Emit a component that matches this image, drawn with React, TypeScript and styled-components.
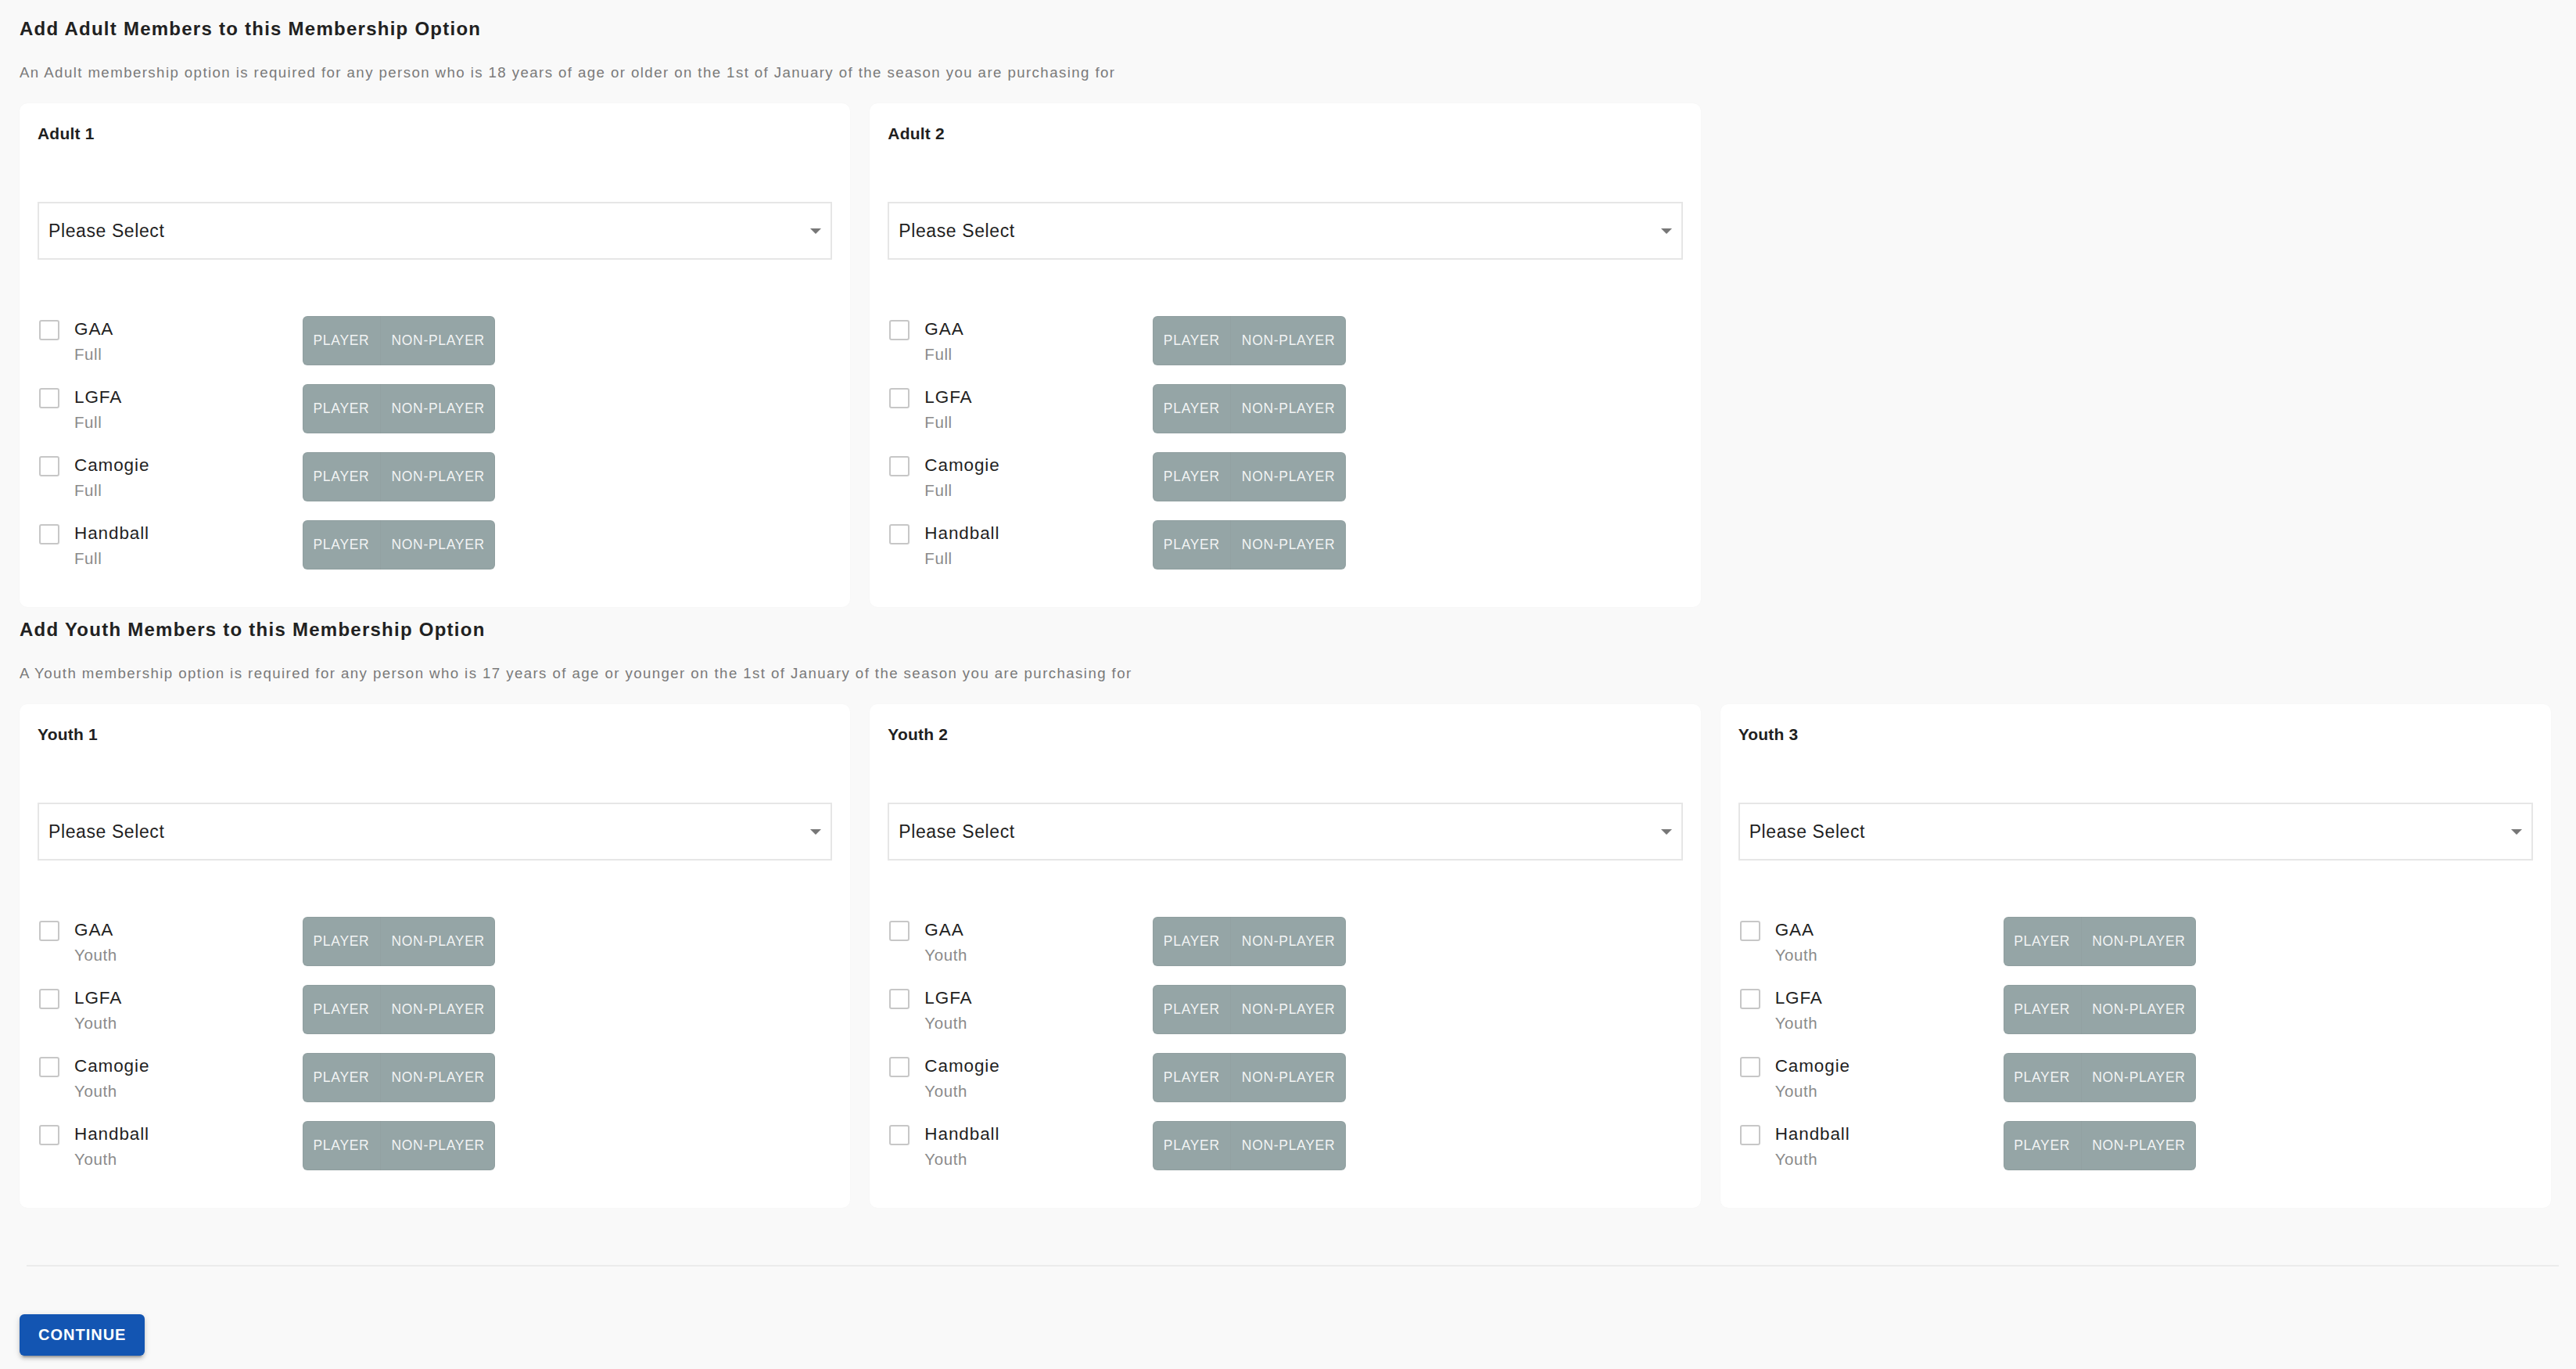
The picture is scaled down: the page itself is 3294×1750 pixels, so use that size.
import React from "react";
import styled, { createGlobalStyle } from "styled-components";

const GlobalStyle = createGlobalStyle`
  html, body { margin: 0; padding: 0; background: #f9f9f9; }
  body { font-family: "Liberation Sans", Arial, Helvetica, sans-serif; color: #212121; }
  * { box-sizing: border-box; }
`;

const Page = styled.div`
  padding: 21px 32px 17px 25px;
  background: #f9f9f9;
  min-height: 1750px;
`;

const Section = styled.section<{ $top?: number }>`
  margin-top: ${(p) => p.$top ?? 0}px;
`;

const Heading = styled.h2`
  margin: 0;
  font-size: 24px;
  line-height: 32px;
  font-weight: 700;
  letter-spacing: 1.25px;
  color: #212121;
`;

const Description = styled.p`
  margin: 27px 0 0;
  font-size: 18.7px;
  line-height: 26px;
  letter-spacing: 1.4px;
  color: #7a7a7a;
`;

const CardGrid = styled.div`
  margin-top: 26px;
  display: grid;
  grid-template-columns: repeat(3, 1fr);
  column-gap: 25px;
`;

const Card = styled.div`
  background: #ffffff;
  border-radius: 10px;
  padding: 25px 23px 48px 23px;
  box-shadow: 0 0 2px rgba(0, 0, 0, 0.03);
`;

const CardTitle = styled.div`
  font-size: 21px;
  line-height: 28px;
  font-weight: 700;
  letter-spacing: 0.2px;
  color: #1f1f1f;
`;

const SelectBox = styled.div`
  margin-top: 73px;
  height: 74px;
  border: 2px solid #e6e6e6;
  display: flex;
  align-items: center;
  justify-content: space-between;
  padding: 0 12px 0 12px;
  background: #fff;
`;

const SelectText = styled.span`
  font-size: 23px;
  letter-spacing: 0.6px;
  color: #1f1f1f;
`;

const Caret = styled.span`
  width: 0;
  height: 0;
  border-left: 7.5px solid transparent;
  border-right: 7.5px solid transparent;
  border-top: 7px solid #777;
`;

const Rows = styled.div`
  margin-top: 72px;
  display: flex;
  flex-direction: column;
  gap: 24px;
`;

const Row = styled.div`
  display: flex;
  align-items: flex-start;
  height: 63px;
`;

const OptionLabel = styled.label`
  width: 339px;
  flex: none;
  display: flex;
  align-items: flex-start;
`;

const CheckBox = styled.span`
  margin: 5px 0 0 2px;
  width: 26px;
  height: 26px;
  border: 2.5px solid #c7c7c7;
  border-radius: 3px;
  flex: none;
`;

const LabelText = styled.div`
  margin-left: 19px;
  display: flex;
  flex-direction: column;
  padding-top: 1.5px;
`;

const SportName = styled.span`
  font-size: 22.5px;
  line-height: 30px;
  letter-spacing: 0.9px;
  color: #1f1f1f;
`;

const SportType = styled.span`
  margin-top: 3px;
  font-size: 20.5px;
  line-height: 27px;
  letter-spacing: 0.6px;
  color: #8a8a8a;
`;

const ToggleGroup = styled.div`
  display: flex;
  height: 63px;
  border-radius: 6px;
  overflow: hidden;
  background: #95a5a6;
  box-shadow: inset 0 0 0 1px rgba(0, 0, 0, 0.04);
`;

const ToggleButton = styled.button<{ $first?: boolean }>`
  border: none;
  border-left: ${(p) => (p.$first ? "none" : "1px solid rgba(0,0,0,0.02)")};
  background: transparent;
  padding: 0 13.5px;
  font-family: "Liberation Sans", Arial, Helvetica, sans-serif;
  font-size: 17.5px;
  letter-spacing: 0.7px;
  color: rgba(255, 255, 255, 0.9);
  text-transform: uppercase;
  cursor: pointer;
`;

const Divider = styled.hr`
  margin: 73px -10px 0 9px;
  border: none;
  height: 2px;
  background: #ececec;
`;

const ContinueButton = styled.button`
  margin-top: 61px;
  height: 53px;
  padding: 0 24px;
  border: none;
  border-radius: 6px;
  background: #1355b2;
  color: #ffffff;
  font-family: "Liberation Sans", Arial, Helvetica, sans-serif;
  font-weight: 700;
  font-size: 20px;
  letter-spacing: 1px;
  text-transform: uppercase;
  box-shadow: 0 6px 2px -4px rgba(0, 0, 0, 0.2), 0 4px 4px 0 rgba(0, 0, 0, 0.14),
    0 2px 10px 0 rgba(0, 0, 0, 0.12);
  cursor: pointer;
`;

const sports = ["GAA", "LGFA", "Camogie", "Handball"];

function MemberCard({ title, type }: { title: string; type: string }) {
  return (
    <Card>
      <CardTitle>{title}</CardTitle>
      <SelectBox>
        <SelectText>Please Select</SelectText>
        <Caret />
      </SelectBox>
      <Rows>
        {sports.map((s) => (
          <Row key={s}>
            <OptionLabel>
              <CheckBox />
              <LabelText>
                <SportName>{s}</SportName>
                <SportType>{type}</SportType>
              </LabelText>
            </OptionLabel>
            <ToggleGroup>
              <ToggleButton $first>Player</ToggleButton>
              <ToggleButton>Non-Player</ToggleButton>
            </ToggleGroup>
          </Row>
        ))}
      </Rows>
    </Card>
  );
}

export default function App() {
  return (
    <>
      <GlobalStyle />
      <Page>
        <Section>
          <Heading>Add Adult Members to this Membership Option</Heading>
          <Description>
            An Adult membership option is required for any person who is 18 years of age or older on the 1st of January of the season you are purchasing for
          </Description>
          <CardGrid>
            <MemberCard title="Adult 1" type="Full" />
            <MemberCard title="Adult 2" type="Full" />
          </CardGrid>
        </Section>
        <Section $top={13}>
          <Heading>Add Youth Members to this Membership Option</Heading>
          <Description>
            A Youth membership option is required for any person who is 17 years of age or younger on the 1st of January of the season you are purchasing for
          </Description>
          <CardGrid>
            <MemberCard title="Youth 1" type="Youth" />
            <MemberCard title="Youth 2" type="Youth" />
            <MemberCard title="Youth 3" type="Youth" />
          </CardGrid>
        </Section>
        <Divider />
        <ContinueButton>Continue</ContinueButton>
      </Page>
    </>
  );
}
